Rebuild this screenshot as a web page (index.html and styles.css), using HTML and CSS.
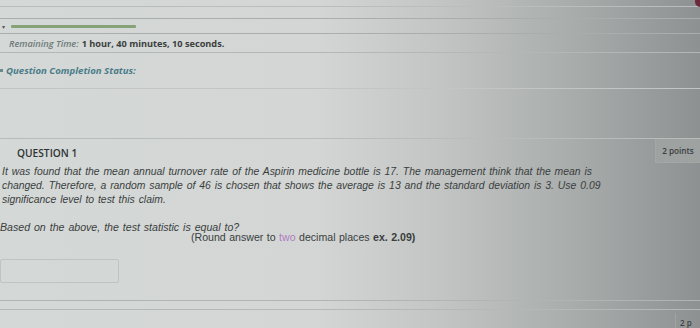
FILE: index.html
```html
<!DOCTYPE html>
<html>
<head>
<meta charset="utf-8">
<link rel="stylesheet" href="styles.css">
</head>
<body>
<div class="page">
  <div class="topbar">
    <div class="tline"></div>
    <span class="corner"></span>
  </div>
  <div class="progress-row">
    <span class="caret">&#9662;</span>
    <div class="progress"></div>
  </div>
  <div class="timer">
    <span class="tlabel">Remaining Time:</span> <b>1 hour, 40 minutes, 10 seconds.</b>
  </div>
  <div class="status">
    <span class="bullet"></span><span class="slabel">Question Completion Status:</span>
  </div>
  <div class="question">
    <div class="qhead">
      <span class="qtitle">QUESTION 1</span>
      <span class="points">2 points</span>
    </div>
    <p class="qtext">It was found that the mean annual turnover rate of the Aspirin medicine bottle is 17. The management think that the mean is changed. Therefore, a random sample of 46 is chosen that shows the average is 13 and the standard deviation is 3. Use 0.09 significance level to test this claim.</p>
    <p class="qask">Based on the above, the test statistic is equal to?</p>
    <p class="qround">(Round answer to <span class="two">two</span> decimal places <b>ex. 2.09)</b></p>
    <div class="answer"></div>
  </div>
  <div class="next">
    <div class="nline"></div>
    <span class="points2">2 p</span>
  </div>
</div>
</body>
</html>
```
FILE: styles.css
```css
html, body {
  margin: 0;
  padding: 0;
}
body {
  width: 700px;
  height: 328px;
  overflow: hidden;
  background: linear-gradient(to right, #d4d8d6 0%, #d3d6d4 45%, #c2c5c4 63%, #a8acab 82%, #8d9191 100%);
  font-family: "Liberation Sans", Arial, sans-serif;
  color: #3a3d3d;
}
.page {
  position: relative;
  width: 700px;
  height: 328px;
}
.topbar {
  height: 18px;
  border-bottom: 1px solid #a9adac;
  position: relative;
}
.tline {
  height: 6px;
  border-bottom: 1px solid #b9bdbc;
}
.corner {
  position: absolute;
  right: -6px;
  top: -4px;
  width: 11px;
  height: 11px;
  border-radius: 50%;
  background: #6a2a3a;
}
.progress-row {
  height: 14px;
  display: flex;
  align-items: center;
  gap: 6px;
  padding-left: 2px;
  border-bottom: 1px solid #a9adac;
}
.caret {
  font-size: 6px;
  color: #555a5a;
}
.progress {
  width: 125px;
  height: 3px;
  background: #86a378;
  border-radius: 1px;
}
.timer {
  height: 18px;
  padding-left: 9px;
  display: flex;
  align-items: center;
  gap: 3px;
  font-family: "Open Sans", sans-serif;
  font-size: 9.2px;
  color: #3b3f3f;
  border-bottom: 1px solid #b3b7b6;
}
.tlabel {
  font-style: italic;
  font-weight: 600;
  color: #6f7a7a;
}
.status {
  height: 35px;
  display: flex;
  align-items: center;
  border-bottom: 1px solid #c2c5c4;
}
.bullet {
  width: 3px;
  height: 3px;
  background: #6a8a90;
  margin-right: 3px;
}
.slabel {
  font-family: "Open Sans", sans-serif;
  font-size: 9.6px;
  font-weight: 700;
  font-style: italic;
  color: #4a7c8a;
}
.question {
  margin-top: 49px;
  border-top: 1px solid #b8bcbb;
  position: relative;
  height: 160px;
}
.qhead {
  height: 20px;
  display: flex;
  align-items: flex-end;
}
.qtitle {
  font-family: "Open Sans", sans-serif;
  font-size: 10.2px;
  font-weight: 600;
  color: #2f3333;
  padding-left: 17px;
  line-height: 12px;
}
.points {
  position: absolute;
  right: 0;
  top: 0;
  width: 44px;
  height: 23px;
  border-left: 1px solid #a3a7a6;
  border-bottom: 1px solid #a3a7a6;
  background: #9ea2a1;
  font-family: "Open Sans", sans-serif;
  font-size: 8.2px;
  font-weight: 600;
  color: #3a3e3e;
  display: flex;
  align-items: center;
  justify-content: center;
}
.qtext {
  margin: 6px 0 0 2px;
  width: 612px;
  font-size: 10.4px;
  font-style: italic;
  line-height: 14px;
  color: #3a3e3e;
  word-spacing: 1px;
}
.qask {
  margin: 15px 0 0 0;
  font-size: 10.6px;
  font-style: italic;
  line-height: 10px;
  color: #3a3e3e;
  word-spacing: 1px;
}
.qround {
  margin: 0 0 0 191px;
  font-size: 10.6px;
  line-height: 10px;
  color: #3a3e3e;
  word-spacing: 0.5px;
}
.two {
  color: #b07cc0;
}
.answer {
  margin-top: 17px;
  width: 117px;
  height: 22px;
  border: 1px solid #c0c3c2;
  border-radius: 2px;
}
.next {
  position: absolute;
  left: 0;
  right: 0;
  top: 300px;
  height: 28px;
  border-top: 1px solid #b0b4b3;
}
.nline {
  margin-top: 8px;
  border-top: 1px solid #b4b8b7;
}
.points2 {
  position: absolute;
  right: 0;
  top: 12px;
  width: 20px;
  height: 16px;
  border-left: 1px solid #a0a4a3;
  font-family: "Open Sans", sans-serif;
  font-size: 8px;
  font-weight: 600;
  color: #3e4242;
  padding-left: 4px;
  line-height: 20px;
}
```
